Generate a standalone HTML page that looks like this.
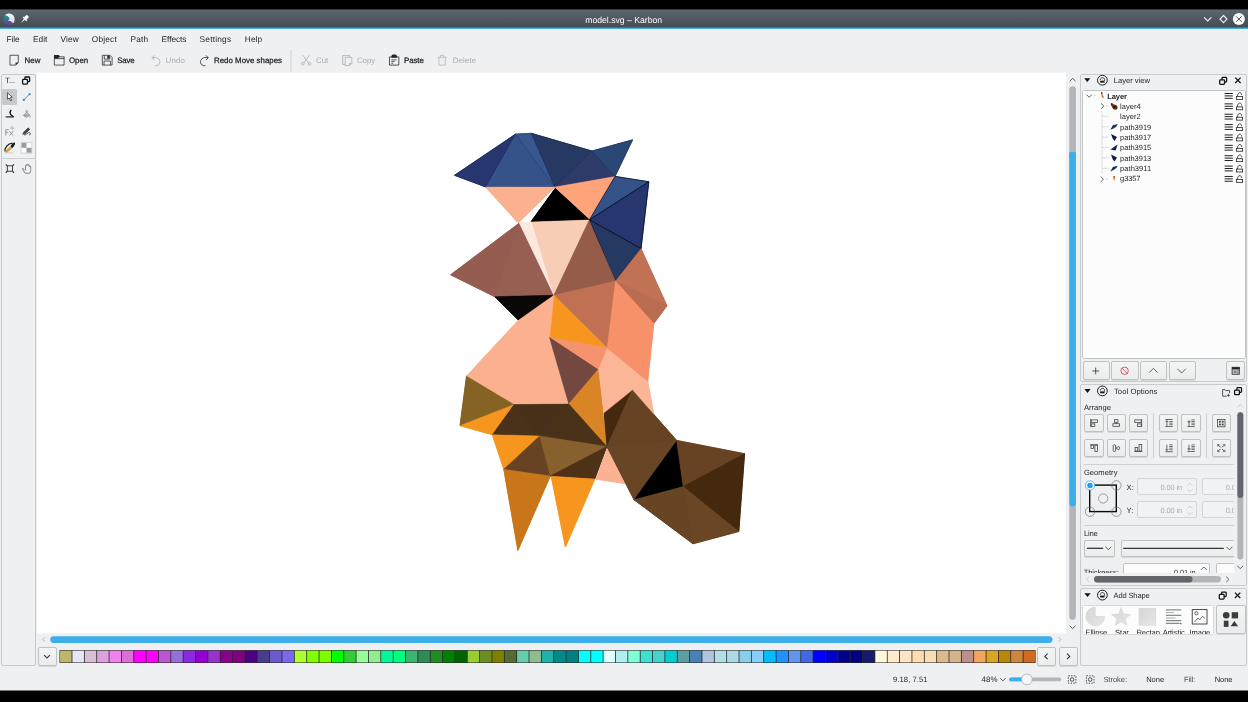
<!DOCTYPE html>
<html>
<head>
<meta charset="utf-8">
<title>model.svg – Karbon</title>
<style>
html,body{margin:0;padding:0;background:#000;}
body{width:1248px;height:702px;overflow:hidden;font-family:"Liberation Sans",sans-serif;}
#root{position:relative;width:1248px;height:702px;overflow:hidden;background:#000;}
#root *{box-sizing:border-box;}
.a{position:absolute;}
.t{position:absolute;white-space:nowrap;line-height:1;text-rendering:geometricPrecision;font-family:"Liberation Sans",sans-serif;}
svg{position:absolute;overflow:visible;}
.btn{position:absolute;border:1px solid #bfc1c3;border-radius:2px;background:linear-gradient(#f3f4f4,#ebecec);box-shadow:0 1px 0 rgba(0,0,0,.10);}
.panel{position:absolute;border:1px solid #c9cbcd;border-radius:2px;background:#eff0f1;}
</style>
</head>

<body>
<div id="root">
<!-- window background, title bar, canvas -->
<svg style="left:0;top:0" width="1248" height="702" viewBox="0 0 1248 702">
 <defs><linearGradient id="tb" x1="0" y1="0" x2="0" y2="1"><stop offset="0" stop-color="#5b666f"/><stop offset="0.5" stop-color="#4f5860"/><stop offset="1" stop-color="#454c53"/></linearGradient></defs>
 <rect x="0" y="9.8" width="1248" height="680.7" fill="#eff0f1"/>
 <rect x="0" y="9.8" width="1248" height="17.6" fill="url(#tb)"/>
 <rect x="0" y="27.2" width="1248" height="0.7" fill="#3a3e43"/>
 <rect x="0" y="27.8" width="1248" height="1.3" fill="#3daee9"/>
 <rect x="0" y="29.1" width="1248" height="0.6" fill="#fafbfb"/>
 <rect x="37" y="72.7" width="1029.1" height="560.6" fill="#ffffff"/>
 <rect x="290.5" y="50" width="0.9" height="21.6" fill="#cdcfd0"/>
</svg>
<svg style="left:0;top:0" width="1248" height="30" viewBox="0 0 1248 30">
 <defs>
  <linearGradient id="kg" x1="0" y1="0" x2="0.35" y2="1"><stop offset="0" stop-color="#12a27d"/><stop offset="0.45" stop-color="#2a7f92"/><stop offset="0.75" stop-color="#4b55a0"/><stop offset="1" stop-color="#7b3a9a"/></linearGradient>
  <linearGradient id="kw" x1="0" y1="0" x2="1" y2="1"><stop offset="0" stop-color="#ffffff"/><stop offset="1" stop-color="#d9dadb"/></linearGradient>
 </defs>
 <circle cx="9.1" cy="19.2" r="5.6" fill="url(#kg)"/>
 <path d="M5 15.2C7.4 12.6 12 12.8 13.8 16C15.2 18.6 14.8 21.4 13.6 23L12 22.6C11.4 21.4 10 20.8 8.2 20.8L8.6 19.8L9.6 19.2C9.6 17.6 8.8 16 5 15.2Z" fill="url(#kw)"/>
 <g transform="translate(24.6,19.2) rotate(45)" fill="#fcfcfc"><rect x="-1.7" y="-4.8" width="3.4" height="4" rx="0.8"/><rect x="-2.7" y="-1.2" width="5.4" height="1.5"/><path d="M-0.7 0.2H0.7L0 5.2Z"/></g>
 <path d="M1204 17.3L1207.7 21L1211.4 17.3" fill="none" stroke="#f0f1f2" stroke-width="1.15"/>
 <path d="M1223.5 15.5L1227 19.1L1223.5 22.7L1220 19.1Z" fill="none" stroke="#f0f1f2" stroke-width="1.15"/>
 <circle cx="1238.9" cy="19.1" r="6" fill="#fcfcfc"/>
 <path d="M1236.2 16.4L1241.6 21.8M1241.6 16.4L1236.2 21.8" fill="none" stroke="#4d555c" stroke-width="1"/>
</svg>

<!-- toolbar icons (22-unit grid scaled to 14.3px) -->
<svg style="left:7.3px;top:52.8px" width="14.3" height="14.3" viewBox="0 0 22 22" fill="none" stroke="#232629" stroke-width="1.15"><path d="M4.6 3.5H17.4V15L13.6 18.6H4.6Z"/><path d="M13.2 14.6H17.4L13.2 18.6Z" fill="#232629" stroke="none"/></svg>
<svg style="left:52.15px;top:52.8px" width="14.3" height="14.3" viewBox="0 0 22 22" fill="none" stroke="#232629" stroke-width="1.15"><path d="M3.6 8.6H18.6V18.6H3.6Z"/><path d="M3 3H10.4L12.4 5.4H19.2V6.6H10.6L9.2 8.6H3Z" fill="#232629" stroke="none"/><path d="M18.6 6V9"/></svg>
<svg style="left:100.2px;top:52.8px" width="14.3" height="14.3" viewBox="0 0 22 22" fill="none" stroke="#232629" stroke-width="1.15"><path d="M3.6 3.6H15.4L18.6 6.8V18.6H3.6Z"/><path d="M6.6 3.6V9.4H15V3.8"/><path d="M11.2 4H14.4V8.6H11.2Z" fill="#232629" stroke="none"/><path d="M6.2 18.6V12.4H16V18.6"/></svg>
<svg style="left:148.95px;top:52.8px" width="14.3" height="14.3" viewBox="0 0 22 22" fill="none" stroke="#a6a9ab" stroke-width="1.25"><path d="M5.2 7.2C12.6 5.6 17.4 10 16.6 14.4C16 18 13 20.2 9.2 19.6"/><path d="M8.2 3.6L4.6 7.2L8 10.8"/></svg>
<svg style="left:196.75px;top:52.8px" width="14.3" height="14.3" viewBox="0 0 22 22" fill="none" stroke="#232629" stroke-width="1.25"><path d="M16.8 7.2C9.4 5.6 4.6 10 5.4 14.4C6 18 9 20.2 12.8 19.6"/><path d="M13.8 3.6L17.4 7.2L14 10.8"/></svg>
<svg style="left:298.95px;top:52.8px" width="14.3" height="14.3" viewBox="0 0 22 22" fill="none" stroke="#a6a9ab" stroke-width="1.15"><path d="M6 3.4L14.6 15.4"/><path d="M16 3.4L7.4 15.4"/><circle cx="5.8" cy="16.6" r="2.1"/><circle cx="16.2" cy="16.6" r="2.1"/></svg>
<svg style="left:339.85px;top:52.8px" width="14.3" height="14.3" viewBox="0 0 22 22" fill="none" stroke="#a6a9ab" stroke-width="1.15"><path d="M15 6.2V4H4.2V17.6H7.8"/><path d="M8 6.6H18.2V16L14.8 19.4H8Z"/><path d="M14.4 15.6H18.2L14.4 19.4Z" fill="#a6a9ab" stroke="none"/></svg>
<svg style="left:386.8px;top:52.8px" width="14.3" height="14.3" viewBox="0 0 22 22" fill="none" stroke="#232629" stroke-width="1.2"><path d="M3.8 6H18.2V18.6H3.8Z"/><path d="M6.6 7.4C6.6 3 8 2.4 11 2.4C14 2.4 15.4 3 15.4 7.4Z" fill="#232629" stroke="none"/><path d="M6.6 10.6H14.6M6.6 13.2H11.6M6.6 15.8H9.4" stroke-width="1.1"/></svg>
<svg style="left:435.35px;top:52.8px" width="14.3" height="14.3" viewBox="0 0 22 22" fill="none" stroke="#b0b3b5" stroke-width="1.15"><path d="M4 6.6H18"/><path d="M8.4 6.4V3.6H13.6V6.4"/><path d="M6.2 6.8V18.6H15.8V6.8"/></svg>

<!-- toolbox dock -->
<div class="a" style="left:1.2px;top:73.6px;width:35px;height:592.4px;border:1px solid #c6c8ca;border-radius:2px;background:#eff0f1;"></div>
<div class="a" style="left:2.1px;top:89.2px;width:15.4px;height:15.5px;border-radius:1.6px;background:#c8c9ca;"></div>
<div class="a" style="left:1.2px;top:158px;width:34.8px;height:0.9px;background:#cdcfd0;"></div>
<svg style="left:0;top:72px" width="40" height="110" viewBox="0 72 40 110">
 <!-- float icon -->
 <rect x="24.9" y="77" width="4.7" height="4.7" rx="0.8" fill="none" stroke="#111" stroke-width="1.3"/>
 <rect x="22.6" y="79.4" width="4.9" height="4.7" rx="0.8" fill="#eff0f1" stroke="#111" stroke-width="1.3"/>
 <!-- arrow cursor -->
 <path d="M7.5 92.8V99.3L9.1 98L10.6 100.9L11.7 100.3L10.3 97.5L12.2 97.2Z" fill="#fcfcfc" stroke="#2b2e31" stroke-width="0.75" stroke-linejoin="round"/>
 <!-- line tool -->
 <path d="M23.8 99.9L29.6 94.2" stroke="#3a3d40" stroke-width="0.6"/>
 <circle cx="23.8" cy="99.9" r="1.15" fill="#1e96f0"/><circle cx="29.6" cy="94.2" r="1.15" fill="#1e96f0"/>
 <!-- calligraphy -->
 <path d="M5.6 116.9H14" stroke="#111" stroke-width="1.1"/>
 <path d="M11.2 110C9.4 112.2 9.4 114.6 13.4 116.5" fill="none" stroke="#111" stroke-width="1.3"/>
 <!-- bucket -->
 <g fill="none" stroke="#85888b" stroke-width="0.75"><circle cx="26.7" cy="111.3" r="0.9"/><path d="M26.7 112.2L23.4 115.4L26.6 117.6L29.6 114.8Z" fill="#c3c5c7"/><path d="M23.4 115.4H29.2"/><path d="M30 115.6V117.4" stroke-width="1"/></g>
 <!-- fx -->
 <g fill="none" stroke="#808386" stroke-width="0.8"><path d="M5.8 135.6V129.6H8.8M5.8 132.4H8.2"/><path d="M9.4 131.2L13.2 135.6M13.2 131.2L9.4 135.6"/><path d="M10.6 128.6C10.6 126.6 13.4 126.4 13.4 128.2C13.4 129.6 11.6 129.4 11.8 128.2" stroke-width="0.6"/></g>
 <!-- pencil -->
 <g fill="none" stroke="#2b2e31"><path d="M23.6 132.2L28.2 127.8L29.8 129.4L25.2 133.8Z" fill="#3a3d40" stroke-width="0.5"/><path d="M22.6 134.6L23.6 132.2L25.2 133.8Z" fill="#555" stroke-width="0.4"/><path d="M24 135C26.4 135.2 27.6 132.2 29.4 132.6C31 133 30.6 135 29.2 135" stroke-width="0.8"/></g>
 <!-- pen -->
 <path d="M5 151.4C4.4 147.8 7.6 143.6 12.6 143" fill="none" stroke="#111" stroke-width="1.1"/>
 <path d="M10.6 146.4C11.6 144 13.6 142.4 15 142.6C15.4 144.4 14 146.8 12 148.2Z" fill="#15182a"/>
 <path d="M10.6 146.4L12 148.2L7.4 152L5.6 152.4L5.4 151Z" fill="#e3a232" stroke="#7a5410" stroke-width="0.3"/>
 <path d="M5.2 152.8H13" stroke="#b9bbbd" stroke-width="0.6"/>
 <!-- checker -->
 <rect x="21.1" y="142.5" width="10.8" height="10.6" fill="#fcfcfc" stroke="#c2c4c5" stroke-width="0.6"/>
 <rect x="21.5" y="142.9" width="5" height="4.9" fill="#9b9b9b"/><rect x="26.5" y="147.8" width="5" height="4.9" fill="#9b9b9b"/>
 <!-- zoom fit -->
 <g fill="none" stroke="#2b2e31" stroke-width="0.9"><rect x="7.3" y="165.8" width="5.2" height="5.4"/><path d="M5.8 164.3L7.3 165.8M14 164.3L12.5 165.8M5.8 172.8L7.3 171.2M14 172.8L12.5 171.2" stroke-width="1.1"/></g>
 <!-- hand -->
 <path d="M24.6 169.8L23 168.4C22.2 167.8 22.4 169.2 23 170L25.2 173.2H29.8C30.8 171.6 30.8 169.6 30.6 166.6C30.4 165.8 29.6 165.8 29.4 166.6V165.4C29.2 164.6 28.2 164.6 28.2 165.4V164.8C28 164 27 164 26.8 164.8V165.6C26.6 164.8 25.6 164.8 25.6 165.8V170.4" fill="#f4f4f5" stroke="#55585b" stroke-width="0.7" stroke-linejoin="round"/>
</svg>

<svg class="a" style="left:0;top:0" width="1248" height="702" viewBox="0 0 1248 702">
<polygon points="607.2,347.8 647.7,381.2 653.8,414.0 640.0,422.0 604.3,412.9 598.0,369.6" fill="#fbb597" stroke="#fbb597" stroke-width="0.9" stroke-linejoin="round"/>
<polygon points="454.5,175.3 515.6,134.1 485.6,186.9" fill="#27366f" stroke="#27366f" stroke-width="0.9" stroke-linejoin="round"/>
<polygon points="515.6,134.1 554.9,187.0 485.6,186.9" fill="#355389" stroke="#355389" stroke-width="0.9" stroke-linejoin="round"/>
<polygon points="515.6,134.1 531.3,133.3 554.9,187.0" fill="#39578f" stroke="#39578f" stroke-width="0.9" stroke-linejoin="round"/>
<polygon points="531.3,133.3 592.0,151.0 554.9,187.0" fill="#263963" stroke="#263963" stroke-width="0.9" stroke-linejoin="round"/>
<polygon points="592.0,151.0 615.0,176.4 554.9,187.0" fill="#2e3b69" stroke="#2e3b69" stroke-width="0.9" stroke-linejoin="round"/>
<polygon points="592.0,151.0 632.6,139.8 615.0,176.4" fill="#2b4775" stroke="#2b4775" stroke-width="0.9" stroke-linejoin="round"/>
<polygon points="485.6,186.9 554.9,187.0 518.2,222.9" fill="#fbb08f" stroke="#fbb08f" stroke-width="0.9" stroke-linejoin="round"/>
<polygon points="554.9,187.0 615.0,176.4 589.4,219.8" fill="#ffa37b" stroke="#ffa37b" stroke-width="0.9" stroke-linejoin="round"/>
<polygon points="555.2,188.4 531.0,221.7 589.4,219.8" fill="#000000" stroke="#000000" stroke-width="0.9" stroke-linejoin="round"/>
<polygon points="615.0,176.4 648.8,181.8 589.4,219.8" fill="#355389" stroke="#355389" stroke-width="0.9" stroke-linejoin="round"/>
<polygon points="648.8,181.8 641.0,248.6 589.4,219.8" fill="#27366f" stroke="#27366f" stroke-width="0.9" stroke-linejoin="round"/>
<polygon points="589.4,219.8 641.0,248.6 615.5,281.0" fill="#263963" stroke="#263963" stroke-width="0.9" stroke-linejoin="round"/>
<polygon points="450.6,274.8 519.2,223.2 494.8,296.7" fill="#955d51" stroke="#955d51" stroke-width="0.9" stroke-linejoin="round"/>
<polygon points="519.2,223.2 553.9,295.2 494.8,296.7" fill="#975e52" stroke="#975e52" stroke-width="0.9" stroke-linejoin="round"/>
<polygon points="519.4,223.1 532.0,222.0 553.9,295.2" fill="#fde8de" stroke="#fde8de" stroke-width="0.9" stroke-linejoin="round"/>
<polygon points="532.0,222.0 589.0,220.0 553.9,295.2" fill="#f8cdb6" stroke="#f8cdb6" stroke-width="0.9" stroke-linejoin="round"/>
<polygon points="589.0,220.4 615.5,281.0 553.9,295.2" fill="#955c49" stroke="#955c49" stroke-width="0.9" stroke-linejoin="round"/>
<polygon points="641.0,248.6 667.0,305.8 615.5,281.0" fill="#c27254" stroke="#c27254" stroke-width="0.9" stroke-linejoin="round"/>
<polygon points="615.5,281.0 667.0,305.8 653.8,323.5" fill="#ba6d50" stroke="#ba6d50" stroke-width="0.9" stroke-linejoin="round"/>
<polygon points="494.8,296.7 553.9,295.2 518.5,320.2" fill="#0a0806" stroke="#0a0806" stroke-width="0.9" stroke-linejoin="round"/>
<polygon points="553.9,295.2 615.5,281.0 607.2,347.8" fill="#c07153" stroke="#c07153" stroke-width="0.9" stroke-linejoin="round"/>
<polygon points="553.9,295.2 549.5,337.4 607.2,347.8" fill="#f7961e" stroke="#f7961e" stroke-width="0.9" stroke-linejoin="round"/>
<polygon points="615.5,281.0 653.8,323.5 647.7,381.2 607.2,347.8" fill="#f7916a" stroke="#f7916a" stroke-width="0.9" stroke-linejoin="round"/>
<polygon points="553.9,295.2 518.5,320.2 466.5,376.2 514.0,404.6 568.8,404.0 549.5,337.4" fill="#fbb190" stroke="#fbb190" stroke-width="0.9" stroke-linejoin="round"/>
<polygon points="549.5,337.4 607.2,347.8 598.0,369.6" fill="#f6936f" stroke="#f6936f" stroke-width="0.9" stroke-linejoin="round"/>
<polygon points="549.5,337.4 598.0,369.6 568.8,404.0" fill="#744841" stroke="#744841" stroke-width="0.9" stroke-linejoin="round"/>
<polygon points="598.0,369.6 568.8,404.0 606.8,446.6" fill="#d98425" stroke="#d98425" stroke-width="0.9" stroke-linejoin="round"/>
<polygon points="466.5,376.2 460.0,425.7 514.0,404.6" fill="#846324" stroke="#846324" stroke-width="0.9" stroke-linejoin="round"/>
<polygon points="460.0,425.7 514.0,404.6 492.3,434.7" fill="#f7961e" stroke="#f7961e" stroke-width="0.9" stroke-linejoin="round"/>
<polygon points="514.0,404.6 492.3,434.7 539.7,435.9" fill="#4a3219" stroke="#4a3219" stroke-width="0.9" stroke-linejoin="round"/>
<polygon points="514.0,404.6 568.8,404.0 539.7,435.9" fill="#47311a" stroke="#47311a" stroke-width="0.9" stroke-linejoin="round"/>
<polygon points="568.8,404.0 606.8,446.6 539.7,435.9" fill="#4a3219" stroke="#4a3219" stroke-width="0.9" stroke-linejoin="round"/>
<polygon points="492.3,434.7 539.7,435.9 503.8,469.3" fill="#f7961e" stroke="#f7961e" stroke-width="0.9" stroke-linejoin="round"/>
<polygon points="539.7,435.9 503.8,469.3 550.3,476.0" fill="#674323" stroke="#674323" stroke-width="0.9" stroke-linejoin="round"/>
<polygon points="539.7,435.9 606.8,446.6 550.3,476.0" fill="#87602e" stroke="#87602e" stroke-width="0.9" stroke-linejoin="round"/>
<polygon points="606.8,446.6 594.8,479.0 550.3,476.0" fill="#4f3118" stroke="#4f3118" stroke-width="0.9" stroke-linejoin="round"/>
<polygon points="503.8,469.3 550.3,476.0 517.9,550.4" fill="#c87619" stroke="#c87619" stroke-width="0.9" stroke-linejoin="round"/>
<polygon points="551.2,476.2 594.8,479.0 565.4,547.0" fill="#f7961e" stroke="#f7961e" stroke-width="0.9" stroke-linejoin="round"/>
<polygon points="607.3,448.8 595.8,479.1 624.5,483.5" fill="#fbb293" stroke="#fbb293" stroke-width="0.9" stroke-linejoin="round"/>
<polygon points="632.5,390.2 604.3,412.9 606.8,446.6" fill="#45290f" stroke="#45290f" stroke-width="0.9" stroke-linejoin="round"/>
<polygon points="632.5,390.2 676.6,440.4 606.8,446.6" fill="#664323" stroke="#664323" stroke-width="0.9" stroke-linejoin="round"/>
<polygon points="606.8,446.6 676.6,440.4 634.0,499.7" fill="#684525" stroke="#684525" stroke-width="0.9" stroke-linejoin="round"/>
<polygon points="676.6,441.2 682.9,486.5 634.4,499.4" fill="#000000" stroke="#000000" stroke-width="0.9" stroke-linejoin="round"/>
<polygon points="676.6,440.4 744.6,453.7 683.2,486.6" fill="#674323" stroke="#674323" stroke-width="0.9" stroke-linejoin="round"/>
<polygon points="744.6,453.7 738.8,531.5 683.2,486.6" fill="#45290f" stroke="#45290f" stroke-width="0.9" stroke-linejoin="round"/>
<polygon points="634.0,499.7 683.2,486.6 693.0,543.8" fill="#674424" stroke="#674424" stroke-width="0.9" stroke-linejoin="round"/>
<polygon points="683.2,486.6 738.8,531.5 693.0,543.8" fill="#6a4625" stroke="#6a4625" stroke-width="0.9" stroke-linejoin="round"/>
<polygon points="607.2,347.8 647.7,381.2 653.8,414.0 640.0,422.0 604.3,412.9 598.0,369.6" fill="#fbb597" stroke="#fbb597" stroke-width="0.4" stroke-linejoin="round"/>
<polygon points="454.5,175.3 515.6,134.1 485.6,186.9" fill="#27366f" stroke="#1b2758" stroke-width="0.5" stroke-linejoin="round"/>
<polygon points="515.6,134.1 554.9,187.0 485.6,186.9" fill="#355389" stroke="#1f3061" stroke-width="0.5" stroke-linejoin="round"/>
<polygon points="515.6,134.1 531.3,133.3 554.9,187.0" fill="#39578f" stroke="#2a4278" stroke-width="0.4" stroke-linejoin="round"/>
<polygon points="531.3,133.3 592.0,151.0 554.9,187.0" fill="#263963" stroke="#1b2a50" stroke-width="0.5" stroke-linejoin="round"/>
<polygon points="592.0,151.0 615.0,176.4 554.9,187.0" fill="#2e3b69" stroke="#222d55" stroke-width="0.5" stroke-linejoin="round"/>
<polygon points="592.0,151.0 632.6,139.8 615.0,176.4" fill="#2b4775" stroke="#1f3560" stroke-width="0.5" stroke-linejoin="round"/>
<polygon points="485.6,186.9 554.9,187.0 518.2,222.9" fill="#fbb08f" stroke="#fbb08f" stroke-width="0.4" stroke-linejoin="round"/>
<polygon points="554.9,187.0 615.0,176.4 589.4,219.8" fill="#ffa37b" stroke="#ffa37b" stroke-width="0.4" stroke-linejoin="round"/>
<polygon points="555.2,188.4 531.0,221.7 589.4,219.8" fill="#000000" stroke="#000000" stroke-width="0.4" stroke-linejoin="round"/>
<polygon points="615.0,176.4 648.8,181.8 589.4,219.8" fill="#355389" stroke="#060b1c" stroke-width="0.7" stroke-linejoin="round"/>
<polygon points="648.8,181.8 641.0,248.6 589.4,219.8" fill="#27366f" stroke="#060b1c" stroke-width="0.7" stroke-linejoin="round"/>
<polygon points="589.4,219.8 641.0,248.6 615.5,281.0" fill="#263963" stroke="#060b1c" stroke-width="0.7" stroke-linejoin="round"/>
<polygon points="450.6,274.8 519.2,223.2 494.8,296.7" fill="#955d51" stroke="#955d51" stroke-width="0.4" stroke-linejoin="round"/>
<polygon points="519.2,223.2 553.9,295.2 494.8,296.7" fill="#975e52" stroke="#975e52" stroke-width="0.4" stroke-linejoin="round"/>
<polygon points="519.4,223.1 532.0,222.0 553.9,295.2" fill="#fde8de" stroke="#fde8de" stroke-width="0.4" stroke-linejoin="round"/>
<polygon points="532.0,222.0 589.0,220.0 553.9,295.2" fill="#f8cdb6" stroke="#f8cdb6" stroke-width="0.4" stroke-linejoin="round"/>
<polygon points="589.0,220.4 615.5,281.0 553.9,295.2" fill="#955c49" stroke="#955c49" stroke-width="0.4" stroke-linejoin="round"/>
<polygon points="641.0,248.6 667.0,305.8 615.5,281.0" fill="#c27254" stroke="#c27254" stroke-width="0.4" stroke-linejoin="round"/>
<polygon points="615.5,281.0 667.0,305.8 653.8,323.5" fill="#ba6d50" stroke="#ba6d50" stroke-width="0.4" stroke-linejoin="round"/>
<polygon points="494.8,296.7 553.9,295.2 518.5,320.2" fill="#0a0806" stroke="#0a0806" stroke-width="0.4" stroke-linejoin="round"/>
<polygon points="553.9,295.2 615.5,281.0 607.2,347.8" fill="#c07153" stroke="#c07153" stroke-width="0.4" stroke-linejoin="round"/>
<polygon points="553.9,295.2 549.5,337.4 607.2,347.8" fill="#f7961e" stroke="#f7961e" stroke-width="0.4" stroke-linejoin="round"/>
<polygon points="615.5,281.0 653.8,323.5 647.7,381.2 607.2,347.8" fill="#f7916a" stroke="#f7916a" stroke-width="0.4" stroke-linejoin="round"/>
<polygon points="553.9,295.2 518.5,320.2 466.5,376.2 514.0,404.6 568.8,404.0 549.5,337.4" fill="#fbb190" stroke="#fbb190" stroke-width="0.4" stroke-linejoin="round"/>
<polygon points="549.5,337.4 607.2,347.8 598.0,369.6" fill="#f6936f" stroke="#f6936f" stroke-width="0.4" stroke-linejoin="round"/>
<polygon points="549.5,337.4 598.0,369.6 568.8,404.0" fill="#744841" stroke="#744841" stroke-width="0.4" stroke-linejoin="round"/>
<polygon points="598.0,369.6 568.8,404.0 606.8,446.6" fill="#d98425" stroke="#d98425" stroke-width="0.4" stroke-linejoin="round"/>
<polygon points="466.5,376.2 460.0,425.7 514.0,404.6" fill="#846324" stroke="#846324" stroke-width="0.4" stroke-linejoin="round"/>
<polygon points="460.0,425.7 514.0,404.6 492.3,434.7" fill="#f7961e" stroke="#f7961e" stroke-width="0.4" stroke-linejoin="round"/>
<polygon points="514.0,404.6 492.3,434.7 539.7,435.9" fill="#4a3219" stroke="#4a3219" stroke-width="0.4" stroke-linejoin="round"/>
<polygon points="514.0,404.6 568.8,404.0 539.7,435.9" fill="#47311a" stroke="#47311a" stroke-width="0.4" stroke-linejoin="round"/>
<polygon points="568.8,404.0 606.8,446.6 539.7,435.9" fill="#4a3219" stroke="#4a3219" stroke-width="0.4" stroke-linejoin="round"/>
<polygon points="492.3,434.7 539.7,435.9 503.8,469.3" fill="#f7961e" stroke="#f7961e" stroke-width="0.4" stroke-linejoin="round"/>
<polygon points="539.7,435.9 503.8,469.3 550.3,476.0" fill="#674323" stroke="#674323" stroke-width="0.4" stroke-linejoin="round"/>
<polygon points="539.7,435.9 606.8,446.6 550.3,476.0" fill="#87602e" stroke="#87602e" stroke-width="0.4" stroke-linejoin="round"/>
<polygon points="606.8,446.6 594.8,479.0 550.3,476.0" fill="#4f3118" stroke="#4f3118" stroke-width="0.4" stroke-linejoin="round"/>
<polygon points="503.8,469.3 550.3,476.0 517.9,550.4" fill="#c87619" stroke="#c87619" stroke-width="0.4" stroke-linejoin="round"/>
<polygon points="551.2,476.2 594.8,479.0 565.4,547.0" fill="#f7961e" stroke="#f7961e" stroke-width="0.4" stroke-linejoin="round"/>
<polygon points="607.3,448.8 595.8,479.1 624.5,483.5" fill="#fbb293" stroke="#fbb293" stroke-width="0.4" stroke-linejoin="round"/>
<polygon points="632.5,390.2 604.3,412.9 606.8,446.6" fill="#45290f" stroke="#45290f" stroke-width="0.4" stroke-linejoin="round"/>
<polygon points="632.5,390.2 676.6,440.4 606.8,446.6" fill="#664323" stroke="#664323" stroke-width="0.4" stroke-linejoin="round"/>
<polygon points="606.8,446.6 676.6,440.4 634.0,499.7" fill="#684525" stroke="#684525" stroke-width="0.4" stroke-linejoin="round"/>
<polygon points="676.6,441.2 682.9,486.5 634.4,499.4" fill="#000000" stroke="#000000" stroke-width="0.4" stroke-linejoin="round"/>
<polygon points="676.6,440.4 744.6,453.7 683.2,486.6" fill="#674323" stroke="#674323" stroke-width="0.4" stroke-linejoin="round"/>
<polygon points="744.6,453.7 738.8,531.5 683.2,486.6" fill="#45290f" stroke="#45290f" stroke-width="0.4" stroke-linejoin="round"/>
<polygon points="634.0,499.7 683.2,486.6 693.0,543.8" fill="#674424" stroke="#674424" stroke-width="0.4" stroke-linejoin="round"/>
<polygon points="683.2,486.6 738.8,531.5 693.0,543.8" fill="#6a4625" stroke="#6a4625" stroke-width="0.4" stroke-linejoin="round"/>
</svg>
<!-- palette -->
<svg style="left:0;top:640px" width="1248" height="30" viewBox="0 640 1248 30">
<rect x="59.50" y="650.10" width="976.11" height="12.90" fill="#2a2a2a"/>
<rect x="60.05" y="650.65" width="11.55" height="11.80" fill="#BDB76B"/>
<rect x="72.40" y="650.65" width="11.55" height="11.80" fill="#E6E6FA"/>
<rect x="84.75" y="650.65" width="11.55" height="11.80" fill="#D8BFD8"/>
<rect x="97.11" y="650.65" width="11.55" height="11.80" fill="#DDA0DD"/>
<rect x="109.46" y="650.65" width="11.55" height="11.80" fill="#EE82EE"/>
<rect x="121.81" y="650.65" width="11.55" height="11.80" fill="#DA70D6"/>
<rect x="134.16" y="650.65" width="11.55" height="11.80" fill="#FF00FF"/>
<rect x="146.51" y="650.65" width="11.55" height="11.80" fill="#FF00FF"/>
<rect x="158.87" y="650.65" width="11.55" height="11.80" fill="#BA55D3"/>
<rect x="171.22" y="650.65" width="11.55" height="11.80" fill="#9370DB"/>
<rect x="183.57" y="650.65" width="11.55" height="11.80" fill="#8A2BE2"/>
<rect x="195.92" y="650.65" width="11.55" height="11.80" fill="#9400D3"/>
<rect x="208.27" y="650.65" width="11.55" height="11.80" fill="#9932CC"/>
<rect x="220.63" y="650.65" width="11.55" height="11.80" fill="#8B008B"/>
<rect x="232.98" y="650.65" width="11.55" height="11.80" fill="#800080"/>
<rect x="245.33" y="650.65" width="11.55" height="11.80" fill="#4B0082"/>
<rect x="257.68" y="650.65" width="11.55" height="11.80" fill="#483D8B"/>
<rect x="270.03" y="650.65" width="11.55" height="11.80" fill="#6A5ACD"/>
<rect x="282.39" y="650.65" width="11.55" height="11.80" fill="#7B68EE"/>
<rect x="294.74" y="650.65" width="11.55" height="11.80" fill="#ADFF2F"/>
<rect x="307.09" y="650.65" width="11.55" height="11.80" fill="#7FFF00"/>
<rect x="319.44" y="650.65" width="11.55" height="11.80" fill="#7CFC00"/>
<rect x="331.79" y="650.65" width="11.55" height="11.80" fill="#00FF00"/>
<rect x="344.15" y="650.65" width="11.55" height="11.80" fill="#32CD32"/>
<rect x="356.50" y="650.65" width="11.55" height="11.80" fill="#98FB98"/>
<rect x="368.85" y="650.65" width="11.55" height="11.80" fill="#90EE90"/>
<rect x="381.20" y="650.65" width="11.55" height="11.80" fill="#00FA9A"/>
<rect x="393.55" y="650.65" width="11.55" height="11.80" fill="#00FF7F"/>
<rect x="405.91" y="650.65" width="11.55" height="11.80" fill="#3CB371"/>
<rect x="418.26" y="650.65" width="11.55" height="11.80" fill="#2E8B57"/>
<rect x="430.61" y="650.65" width="11.55" height="11.80" fill="#228B22"/>
<rect x="442.96" y="650.65" width="11.55" height="11.80" fill="#008000"/>
<rect x="455.31" y="650.65" width="11.55" height="11.80" fill="#006400"/>
<rect x="467.67" y="650.65" width="11.55" height="11.80" fill="#9ACD32"/>
<rect x="480.02" y="650.65" width="11.55" height="11.80" fill="#6B8E23"/>
<rect x="492.37" y="650.65" width="11.55" height="11.80" fill="#808000"/>
<rect x="504.72" y="650.65" width="11.55" height="11.80" fill="#556B2F"/>
<rect x="517.07" y="650.65" width="11.55" height="11.80" fill="#66CDAA"/>
<rect x="529.43" y="650.65" width="11.55" height="11.80" fill="#8FBC8F"/>
<rect x="541.78" y="650.65" width="11.55" height="11.80" fill="#20B2AA"/>
<rect x="554.13" y="650.65" width="11.55" height="11.80" fill="#008B8B"/>
<rect x="566.48" y="650.65" width="11.55" height="11.80" fill="#008080"/>
<rect x="578.83" y="650.65" width="11.55" height="11.80" fill="#00FFFF"/>
<rect x="591.19" y="650.65" width="11.55" height="11.80" fill="#00FFFF"/>
<rect x="603.54" y="650.65" width="11.55" height="11.80" fill="#E0FFFF"/>
<rect x="615.89" y="650.65" width="11.55" height="11.80" fill="#AFEEEE"/>
<rect x="628.24" y="650.65" width="11.55" height="11.80" fill="#7FFFD4"/>
<rect x="640.59" y="650.65" width="11.55" height="11.80" fill="#40E0D0"/>
<rect x="652.95" y="650.65" width="11.55" height="11.80" fill="#48D1CC"/>
<rect x="665.30" y="650.65" width="11.55" height="11.80" fill="#00CED1"/>
<rect x="677.65" y="650.65" width="11.55" height="11.80" fill="#5F9EA0"/>
<rect x="690.00" y="650.65" width="11.55" height="11.80" fill="#4682B4"/>
<rect x="702.35" y="650.65" width="11.55" height="11.80" fill="#B0C4DE"/>
<rect x="714.71" y="650.65" width="11.55" height="11.80" fill="#B0E0E6"/>
<rect x="727.06" y="650.65" width="11.55" height="11.80" fill="#ADD8E6"/>
<rect x="739.41" y="650.65" width="11.55" height="11.80" fill="#87CEEB"/>
<rect x="751.76" y="650.65" width="11.55" height="11.80" fill="#87CEFA"/>
<rect x="764.11" y="650.65" width="11.55" height="11.80" fill="#00BFFF"/>
<rect x="776.47" y="650.65" width="11.55" height="11.80" fill="#1E90FF"/>
<rect x="788.82" y="650.65" width="11.55" height="11.80" fill="#6495ED"/>
<rect x="801.17" y="650.65" width="11.55" height="11.80" fill="#4169E1"/>
<rect x="813.52" y="650.65" width="11.55" height="11.80" fill="#0000FF"/>
<rect x="825.87" y="650.65" width="11.55" height="11.80" fill="#0000CD"/>
<rect x="838.23" y="650.65" width="11.55" height="11.80" fill="#00008B"/>
<rect x="850.58" y="650.65" width="11.55" height="11.80" fill="#000080"/>
<rect x="862.93" y="650.65" width="11.55" height="11.80" fill="#191970"/>
<rect x="875.28" y="650.65" width="11.55" height="11.80" fill="#FFF8DC"/>
<rect x="887.63" y="650.65" width="11.55" height="11.80" fill="#FFEBCD"/>
<rect x="899.99" y="650.65" width="11.55" height="11.80" fill="#FFE4C4"/>
<rect x="912.34" y="650.65" width="11.55" height="11.80" fill="#FFDEAD"/>
<rect x="924.69" y="650.65" width="11.55" height="11.80" fill="#F5DEB3"/>
<rect x="937.04" y="650.65" width="11.55" height="11.80" fill="#DEB887"/>
<rect x="949.39" y="650.65" width="11.55" height="11.80" fill="#D2B48C"/>
<rect x="961.75" y="650.65" width="11.55" height="11.80" fill="#BC8F8F"/>
<rect x="974.10" y="650.65" width="11.55" height="11.80" fill="#F4A460"/>
<rect x="986.45" y="650.65" width="11.55" height="11.80" fill="#DAA520"/>
<rect x="998.80" y="650.65" width="11.55" height="11.80" fill="#B8860B"/>
<rect x="1011.15" y="650.65" width="11.55" height="11.80" fill="#CD853F"/>
<rect x="1023.51" y="650.65" width="11.55" height="11.80" fill="#D2691E"/>
</svg>
<div class="btn" style="left:37.6px;top:646.6px;width:19.2px;height:19.6px;"></div>
<div class="btn" style="left:1036.6px;top:646.6px;width:19.4px;height:19.6px;"></div>
<div class="btn" style="left:1058.8px;top:646.6px;width:19.4px;height:19.6px;"></div>
<svg style="left:0;top:630px" width="1248" height="40" viewBox="0 630 1248 40" fill="none">
<path d="M44.1 655.1L47 658L49.9 655.1" stroke="#2b2e31" stroke-width="1.05"/>
<path d="M1047.6 653.6L1044.8 656.4L1047.6 659.2" stroke="#2b2e31" stroke-width="1.05"/>
<path d="M1067 653.6L1069.8 656.4L1067 659.2" stroke="#2b2e31" stroke-width="1.05"/>
<rect x="50.3" y="636.2" width="1002.2" height="6.8" rx="3.4" fill="#3daee9"/>
<path d="M45 637.4L42.8 639.6L45 641.8" stroke="#a4a7a9" stroke-width="0.85"/>
<path d="M1058.6 637.4L1060.8 639.6L1058.6 641.8" stroke="#a4a7a9" stroke-width="0.85"/>
</svg>
<svg style="left:1064px;top:72px" width="16" height="564" viewBox="1064 72 16 564" fill="none">
<rect x="1069.3" y="86.3" width="6.6" height="533.6" rx="3.3" fill="#b3b5b8"/>
<rect x="1069.3" y="152.2" width="6.6" height="354.2" rx="3.3" fill="#3daee9"/>
<rect x="1069.3" y="152.2" width="6.6" height="6" fill="#3daee9"/>
<path d="M1069.7 81.2L1072.6 78.4L1075.5 81.2" stroke="#3a3d40" stroke-width="0.85"/>
<path d="M1069.7 625.8L1072.6 628.6L1075.5 625.8" stroke="#3a3d40" stroke-width="0.85"/>
</svg>
<!-- status bar widgets -->
<svg style="left:990px;top:668px" width="120" height="24" viewBox="990 668 120 24" fill="none">
 <path d="M1000.2 678.2L1002.9 680.9L1005.6 678.2" stroke="#3a3d40" stroke-width="0.85"/>
 <rect x="1009.2" y="677.5" width="52" height="3.8" rx="1.9" fill="#b3b5b8"/>
 <rect x="1009.2" y="677.5" width="19" height="3.8" rx="1.9" fill="#3daee9"/>
 <circle cx="1026.9" cy="679.4" r="5.4" fill="#f6f6f7" stroke="#a8abad" stroke-width="0.8"/>
 <g stroke="#2b2e31" stroke-width="0.8">
  <path d="M1068.3 675.8H1075.9V683.2H1068.3Z" stroke-dasharray="1.5 1.2"/>
  <circle cx="1072.1" cy="679.5" r="1.8"/>
  <path d="M1086.4 675.8H1094V683.2H1086.4Z" stroke-dasharray="1.5 1.2"/>
  <circle cx="1090.2" cy="679.5" r="1.8"/>
 </g>
</svg>

<!-- layer view dock -->
<div class="panel" style="left:1080.2px;top:74.2px;width:166.6px;height:308px;"></div>
<div class="a" style="left:1082.4px;top:90.2px;width:163.2px;height:269.2px;border:1px solid #c3c5c7;border-radius:1.5px;background:#fcfcfc;"></div>
<div class="btn" style="left:1082.5px;top:361.4px;width:27.1px;height:18.8px;"></div>
<div class="btn" style="left:1111.4px;top:361.4px;width:27.2px;height:18.8px;"></div>
<div class="btn" style="left:1140.4px;top:361.4px;width:26.4px;height:18.8px;"></div>
<div class="btn" style="left:1168.6px;top:361.4px;width:27.2px;height:18.8px;"></div>
<div class="btn" style="left:1226.2px;top:361.4px;width:19.2px;height:18.8px;"></div>
<svg style="left:1078px;top:72px" width="170" height="312" viewBox="1078 72 170 312" fill="none">
<path d="M1084.2 78.3H1090.4L1087.3 82.1Z" fill="#111"/>
<circle cx="1102.4" cy="80.2" r="4.9" stroke="#151515" stroke-width="0.95"/>
<path d="M1100.3 79.9C1100.3 77.0 1104.5 77.0 1104.5 79.6L1104.5 80.8" stroke="#151515" stroke-width="0.8"/>
<rect x="1100.2" y="80.7" width="4.3" height="1.9" fill="#151515"/>
<rect x="1222.0" y="77.4" width="4.6" height="4.6" rx="0.8" stroke="#111" stroke-width="1.25"/>
<rect x="1219.7" y="79.8" width="4.8" height="4.6" rx="0.8" fill="#eff0f1" stroke="#111" stroke-width="1.25"/>
<path d="M1235.2 77.6L1240.6 83.0M1240.6 77.6L1235.2 83.0" stroke="#111" stroke-width="1.25"/>
<path d="M1086.5 94.6L1089.2 97.3L1091.9 94.6" stroke="#3a3d40" stroke-width="0.8"/>
<path d="M1093.2 95.7H1095.8" stroke="#c9cbcc" stroke-width="0.7"/>
<path d="M1101 103.4L1103.8 106.1L1101 108.8" stroke="#3a3d40" stroke-width="0.8"/>
<path d="M1106.1 105.8H1108.4" stroke="#c9cbcc" stroke-width="0.7"/>
<path d="M1100.6 176.5L1103.4 179.2L1100.6 181.9" stroke="#3a3d40" stroke-width="0.8"/>
<path d="M1105.6 179H1107.8" stroke="#c9cbcc" stroke-width="0.7"/>
<path d="M1102 110.2V173.6" stroke="#cfd0d1" stroke-width="0.7"/>
<path d="M1102 116.3H1108.6" stroke="#cfd0d1" stroke-width="0.7"/>
<path d="M1102 126.7H1108.6" stroke="#cfd0d1" stroke-width="0.7"/>
<path d="M1102 137.1H1108.6" stroke="#cfd0d1" stroke-width="0.7"/>
<path d="M1102 147.5H1108.6" stroke="#cfd0d1" stroke-width="0.7"/>
<path d="M1102 157.9H1108.6" stroke="#cfd0d1" stroke-width="0.7"/>
<path d="M1102 168.3H1108.6" stroke="#cfd0d1" stroke-width="0.7"/>
<path d="M1100.6 92.2L1102.4 92L1102.6 94L1101.2 94Z" fill="#3a5a9a"/>
<path d="M1101 94L1102.8 94L1103.4 96.6L1101.4 96.2Z" fill="#f28a4c"/>
<path d="M1101.6 96.2L1103.8 96.6L1103.8 97.8L1101.8 97.4Z" fill="#b5651d"/>
<path d="M1110.8 103.4C1111.8 102.4 1113 103.4 1113.6 104.6C1115.4 104.4 1117.4 105.4 1117.6 107.4C1117.6 109.2 1116 110 1114.6 109.6C1113 109.2 1112.4 107.8 1111.8 106.4C1111 105.4 1110.4 104.4 1110.8 103.4Z" fill="#5c3314"/>
<path d="M1113.4 106.2L1115.2 106L1115.6 107.8L1114 108.2Z" fill="#1d1108"/>
<path d="M1110.3 129.7L1112.9 125.2L1117.7 124.1L1116.4 126.4L1113.6 128.4Z" fill="#1b2f6e"/>
<path d="M1111 133.9L1117 136.9L1114.6 140.9L1112.8 138.7Z" fill="#0f1b4c"/>
<path d="M1117.6 144.6L1115.6 150.6L1110.4 149.4Z" fill="#0f1b4c"/>
<path d="M1111 154.6L1117 157.6L1114.6 161.6L1112.8 159.4Z" fill="#0f1b4c"/>
<path d="M1110.3 171.4L1112.9 166.9L1117.7 165.8L1116.4 168.1L1113.6 170.1Z" fill="#1b2f6e"/>
<path d="M1113.2 176L1115.2 176L1115.2 178L1113.4 178Z" fill="#d85a2a"/><path d="M1113.2 178L1115.2 178L1115 180.2L1113.4 180Z" fill="#f0a050"/>
<path d="M1224.6 93.50H1232.8M1224.6 95.90H1232.8M1224.6 98.30H1232.8" stroke="#151515" stroke-width="0.95"/>
<rect x="1236.4" y="96.50" width="6.2" height="2.9" stroke="#2b2e31" stroke-width="0.85"/>
<path d="M1237.5 96.50C1237.3 91.90 1241.5 91.50 1241.7 95.10" stroke="#2b2e31" stroke-width="0.85"/>
<path d="M1224.6 103.87H1232.8M1224.6 106.27H1232.8M1224.6 108.67H1232.8" stroke="#151515" stroke-width="0.95"/>
<rect x="1236.4" y="106.87" width="6.2" height="2.9" stroke="#2b2e31" stroke-width="0.85"/>
<path d="M1237.5 106.87C1237.3 102.27 1241.5 101.87 1241.7 105.47" stroke="#2b2e31" stroke-width="0.85"/>
<path d="M1224.6 114.24H1232.8M1224.6 116.64H1232.8M1224.6 119.04H1232.8" stroke="#151515" stroke-width="0.95"/>
<rect x="1236.4" y="117.24" width="6.2" height="2.9" stroke="#2b2e31" stroke-width="0.85"/>
<path d="M1237.5 117.24C1237.3 112.64 1241.5 112.24 1241.7 115.84" stroke="#2b2e31" stroke-width="0.85"/>
<path d="M1224.6 124.61H1232.8M1224.6 127.01H1232.8M1224.6 129.41H1232.8" stroke="#151515" stroke-width="0.95"/>
<rect x="1236.4" y="127.61" width="6.2" height="2.9" stroke="#2b2e31" stroke-width="0.85"/>
<path d="M1237.5 127.61C1237.3 123.01 1241.5 122.61 1241.7 126.21" stroke="#2b2e31" stroke-width="0.85"/>
<path d="M1224.6 134.98H1232.8M1224.6 137.38H1232.8M1224.6 139.78H1232.8" stroke="#151515" stroke-width="0.95"/>
<rect x="1236.4" y="137.98" width="6.2" height="2.9" stroke="#2b2e31" stroke-width="0.85"/>
<path d="M1237.5 137.98C1237.3 133.38 1241.5 132.98 1241.7 136.58" stroke="#2b2e31" stroke-width="0.85"/>
<path d="M1224.6 145.35H1232.8M1224.6 147.75H1232.8M1224.6 150.15H1232.8" stroke="#151515" stroke-width="0.95"/>
<rect x="1236.4" y="148.35" width="6.2" height="2.9" stroke="#2b2e31" stroke-width="0.85"/>
<path d="M1237.5 148.35C1237.3 143.75 1241.5 143.35 1241.7 146.95" stroke="#2b2e31" stroke-width="0.85"/>
<path d="M1224.6 155.72H1232.8M1224.6 158.12H1232.8M1224.6 160.52H1232.8" stroke="#151515" stroke-width="0.95"/>
<rect x="1236.4" y="158.72" width="6.2" height="2.9" stroke="#2b2e31" stroke-width="0.85"/>
<path d="M1237.5 158.72C1237.3 154.12 1241.5 153.72 1241.7 157.32" stroke="#2b2e31" stroke-width="0.85"/>
<path d="M1224.6 166.09H1232.8M1224.6 168.49H1232.8M1224.6 170.89H1232.8" stroke="#151515" stroke-width="0.95"/>
<rect x="1236.4" y="169.09" width="6.2" height="2.9" stroke="#2b2e31" stroke-width="0.85"/>
<path d="M1237.5 169.09C1237.3 164.49 1241.5 164.09 1241.7 167.69" stroke="#2b2e31" stroke-width="0.85"/>
<path d="M1224.6 176.46H1232.8M1224.6 178.86H1232.8M1224.6 181.26H1232.8" stroke="#151515" stroke-width="0.95"/>
<rect x="1236.4" y="179.46" width="6.2" height="2.9" stroke="#2b2e31" stroke-width="0.85"/>
<path d="M1237.5 179.46C1237.3 174.86 1241.5 174.46 1241.7 178.06" stroke="#2b2e31" stroke-width="0.85"/>
<path d="M1092.3 371H1099.1M1095.7 367.6V374.4" stroke="#2b2e31" stroke-width="0.8"/>
<circle cx="1124.6" cy="370.8" r="3.7" stroke="#da4453" stroke-width="0.9"/><path d="M1122 368.2L1127.2 373.4" stroke="#da4453" stroke-width="0.9"/>
<path d="M1149.2 372.6L1153.4 368.4L1157.6 372.6" stroke="#3a3d40" stroke-width="0.8"/>
<path d="M1177.4 368.8L1181.6 373L1185.8 368.8" stroke="#3a3d40" stroke-width="0.8"/>
<rect x="1232" y="367.2" width="7.6" height="7.2" fill="#9a9c9e" stroke="#3a3d40" stroke-width="0.7"/><rect x="1232" y="367.2" width="7.6" height="2" fill="#232629"/><rect x="1233.2" y="370.6" width="3.4" height="2.6" fill="#7f8183" stroke="#e9e9e9" stroke-width="0.4"/>
</svg>
<!-- tool options dock -->
<div class="panel" style="left:1080.2px;top:384.3px;width:166.6px;height:202px;"></div>
<div class="a" style="left:1082px;top:399px;width:152px;height:173.9px;overflow:hidden;">
<div class="btn" style="left:2.4px;top:14.8px;width:19.3px;height:18.6px;"></div>
<div class="btn" style="left:24.6px;top:14.8px;width:19.1px;height:18.6px;"></div>
<div class="btn" style="left:46.7px;top:14.8px;width:19.2px;height:18.6px;"></div>
<div class="btn" style="left:77.3px;top:14.8px;width:19.2px;height:18.6px;"></div>
<div class="btn" style="left:99.4px;top:14.8px;width:19.2px;height:18.6px;"></div>
<div class="btn" style="left:129.8px;top:14.8px;width:19.1px;height:18.6px;"></div>
<div class="btn" style="left:2.4px;top:39.6px;width:19.3px;height:18.9px;"></div>
<div class="btn" style="left:24.6px;top:39.6px;width:19.1px;height:18.9px;"></div>
<div class="btn" style="left:46.7px;top:39.6px;width:19.2px;height:18.9px;"></div>
<div class="btn" style="left:77.3px;top:39.6px;width:19.2px;height:18.9px;"></div>
<div class="btn" style="left:99.4px;top:39.6px;width:19.2px;height:18.9px;"></div>
<div class="btn" style="left:129.8px;top:39.6px;width:19.1px;height:18.9px;"></div>
<div class="a" style="left:71.2px;top:14.0px;width:0.9px;height:45px;background:#cfd1d2;"></div>
<div class="a" style="left:123.6px;top:14.0px;width:0.9px;height:45px;background:#cfd1d2;"></div>
<div class="a" style="left:1.7px;top:65.1px;width:150.4px;height:0.9px;background:#cfd1d2;"></div>
<div class="a" style="left:1.7px;top:125.9px;width:150.4px;height:0.9px;background:#cfd1d2;"></div>
<div class="a" style="left:55.3px;top:79.3px;width:60px;height:17.1px;border:1px solid #d3d5d6;border-radius:2px;background:#f1f2f3;"></div>
<div class="a" style="left:55.3px;top:102.2px;width:60px;height:17.1px;border:1px solid #d3d5d6;border-radius:2px;background:#f1f2f3;"></div>
<div class="a" style="left:120.2px;top:79.3px;width:60px;height:17.1px;border:1px solid #d3d5d6;border-radius:2px;background:#f1f2f3;"></div>
<div class="a" style="left:120.2px;top:102.2px;width:60px;height:17.1px;border:1px solid #d3d5d6;border-radius:2px;background:#f1f2f3;"></div>
<div class="btn" style="left:2.4px;top:141.1px;width:31.1px;height:16.7px;"></div>
<div class="btn" style="left:38.6px;top:141.1px;width:119.4px;height:16.7px;"></div>
<div class="a" style="left:40.9px;top:164.4px;width:87.6px;height:17px;border:1px solid #c0c2c4;border-radius:2px;background:#fcfcfc;"></div>
<div class="a" style="left:134.2px;top:164.4px;width:40px;height:17px;border:1px solid #c0c2c4;border-radius:2px;background:#fcfcfc;"></div>
<div class="a" style="left:0;top:0;width:152px;height:174px;will-change:transform;z-index:2;">
<span class="t" style="left:1.70px;top:169.97px;font-size:7.6px;color:#232629;letter-spacing:-0.130px;font-weight:normal">Thickness:</span>
<span class="t" style="left:92.00px;top:170.14px;font-size:7.4px;color:#232629;letter-spacing:-0.080px;font-weight:normal">0.01 in</span>
<span class="t" style="left:143.80px;top:84.64px;font-size:7.4px;color:#a9acae;letter-spacing:-0.086px;font-weight:normal">0.00 in</span>
<span class="t" style="left:143.80px;top:107.54px;font-size:7.4px;color:#a9acae;letter-spacing:-0.086px;font-weight:normal">0.00 in</span>
</div>
<svg style="left:0;top:0" width="152" height="174" viewBox="1082 399 152 174" fill="none">
<g transform="translate(1094.1,423.1)" stroke="#3a3d40" stroke-width="0.75"><path d="M-3.4 -4V4"/><rect x="-2.9" y="-3.2" width="6.4" height="2.6"/><rect x="-2.9" y="0.8" width="3.6" height="2.6"/></g>
<g transform="translate(1116.2,423.1)" stroke="#3a3d40" stroke-width="0.75"><rect x="-1.7" y="-3.4" width="3.4" height="2.6"/><rect x="-3.3" y="0.6" width="6.6" height="2.6"/><path d="M0 -0.8V0.6"/></g>
<g transform="translate(1138.3,423.1)" stroke="#3a3d40" stroke-width="0.75"><path d="M3.4 -4V4"/><rect x="-3.5" y="-3.2" width="6.4" height="2.6"/><rect x="-0.7" y="0.8" width="3.6" height="2.6"/></g>
<g transform="translate(1168.9,423.1)" stroke="#3a3d40" stroke-width="0.75"><path d="M-3.6 -3.6H3.8"/><path d="M-2 3.4V-2.4M-3.4 -1L-2 -2.4L-0.6 -1"/><path d="M0.4 -1.6H3.8M0.4 0H3.8M0.4 1.6H3.8M-3.6 3.4H3.8" stroke-width="0.7"/></g>
<g transform="translate(1191.0,423.1)" stroke="#3a3d40" stroke-width="0.75"><path d="M-2 3.4V-3M-3.6 -1.2H-0.4"/><path d="M0.4 -3.2H3.8M0.4 -1.6H3.8M0.4 0H3.8M0.4 1.6H3.8M-3.6 3.4H3.8" stroke-width="0.7"/></g>
<g transform="translate(1221.3,423.1)" stroke="#3a3d40" stroke-width="0.75"><rect x="-3.7" y="-3.7" width="7.4" height="7.4"/><rect x="-2.3" y="-2.3" width="1.8" height="1.8" fill="#3a3d40" stroke="none"/><rect x="0.5" y="-2.3" width="1.8" height="1.8" fill="#3a3d40" stroke="none"/><rect x="-2.3" y="0.5" width="1.8" height="1.8" fill="#3a3d40" stroke="none"/><rect x="0.5" y="0.5" width="1.8" height="1.8" fill="#3a3d40" stroke="none"/></g>
<g transform="translate(1094.1,448.1)" stroke="#3a3d40" stroke-width="0.75"><path d="M-4 -3.4H4"/><rect x="-3.2" y="-2.9" width="2.6" height="3.4"/><rect x="0.8" y="-2.9" width="2.6" height="6.4"/></g>
<g transform="translate(1116.2,448.1)" stroke="#3a3d40" stroke-width="0.75"><rect x="-3" y="-3.3" width="2.4" height="6.6" rx="0.8"/><rect x="0.8" y="-1.5" width="2.6" height="3" rx="1.2"/><path d="M-0.6 0H0.8"/></g>
<g transform="translate(1138.3,448.1)" stroke="#3a3d40" stroke-width="0.75"><path d="M-4 3.4H4"/><rect x="-3.2" y="-0.5" width="2.6" height="3.4"/><rect x="0.8" y="-3.5" width="2.6" height="6.4"/></g>
<g transform="translate(1168.9,448.1)" stroke="#3a3d40" stroke-width="0.75"><path d="M-3.6 3.6H3.8"/><path d="M-2 -3.4V2.4M-3.4 1L-2 2.4L-0.6 1"/><path d="M0.4 -3.2H3.8M0.4 -1.6H3.8M0.4 0H3.8M0.4 1.6H3.8" stroke-width="0.7"/></g>
<g transform="translate(1191.0,448.1)" stroke="#3a3d40" stroke-width="0.75"><path d="M-2 -3.4V2.6M-3.6 0.8H-0.4"/><path d="M0.4 -3.2H3.8M0.4 -1.6H3.8M0.4 0H3.8M0.4 1.6H3.8M-3.6 3.4H3.8" stroke-width="0.7"/></g>
<g transform="translate(1221.3,448.1)" stroke="#3a3d40" stroke-width="0.75"><path d="M-3.4 -3.4L-0.8 -0.8M3.4 -3.4L0.8 -0.8M-3.4 3.4L-0.8 0.8M3.4 3.4L0.8 0.8" stroke-width="0.9"/><path d="M-3.6 -1.6V-3.6H-1.6M3.6 -1.6V-3.6H1.6M-3.6 1.6V3.6H-1.6M3.6 1.6V3.6H1.6" stroke-width="0.6"/></g>
<rect x="1089.7" y="485.1" width="26.6" height="26.5" stroke="#0a0a0a" stroke-width="1.4"/>
<circle cx="1116.4" cy="485.4" r="4.7" stroke="#5f6366" stroke-width="0.6"/>
<circle cx="1090.0" cy="511.7" r="4.7" stroke="#5f6366" stroke-width="0.6"/>
<circle cx="1116.4" cy="511.7" r="4.7" stroke="#5f6366" stroke-width="0.6"/>
<circle cx="1103.2" cy="498.5" r="4.6" stroke="#5f6366" stroke-width="0.6"/>
<circle cx="1090" cy="485.4" r="4.7" fill="#eaf5fc" stroke="#3daee9" stroke-width="0.7"/><circle cx="1090" cy="485.4" r="2.7" fill="#2a9de6"/>
<path d="M1187.4 485.7L1190 483.1L1192.6 485.7M1187.4 489.1L1190 491.7L1192.6 489.1" stroke="#c3c5c7" stroke-width="0.75"/>
<path d="M1187.4 508.6L1190 506.0L1192.6 508.6M1187.4 512.0L1190 514.6L1192.6 512.0" stroke="#c3c5c7" stroke-width="0.75"/>
<path d="M1087 548.3H1103.2" stroke="#31363b" stroke-width="1.3"/>
<path d="M1105.4 546.8L1108.3 549.7L1111.2 546.8" stroke="#3a3d40" stroke-width="0.8"/>
<path d="M1123.2 548.3H1223.8" stroke="#31363b" stroke-width="1.3"/>
<path d="M1226.4 546.8L1229.4 549.8L1232.4 546.8" stroke="#3a3d40" stroke-width="0.8"/>
<path d="M1200.8 570L1203.8 567L1206.8 570" stroke="#3a3d40" stroke-width="0.8"/>
</svg>
</div>
<svg style="left:1078px;top:384px" width="170" height="204" viewBox="1078 384 170 204" fill="none">
<path d="M1084.4 389.1H1090.6L1087.5 392.9Z" fill="#111"/>
<circle cx="1102.4" cy="390.9" r="4.9" stroke="#151515" stroke-width="0.95"/>
<path d="M1100.3 390.6C1100.3 387.7 1104.5 387.7 1104.5 390.3L1104.5 391.5" stroke="#151515" stroke-width="0.8"/>
<rect x="1100.2" y="391.4" width="4.3" height="1.9" fill="#151515"/>
<path d="M1222.6 396.2V389.6H1225L1225.8 390.6H1229.6V393" stroke="#2b2e31" stroke-width="0.8"/><path d="M1222.6 396.2H1226.6" stroke="#2b2e31" stroke-width="0.8"/><path d="M1228.4 393.8V396.8M1226.9 395.3H1229.9" stroke="#2b2e31" stroke-width="0.75"/>
<rect x="1236.9" y="387.7" width="4.6" height="4.6" rx="0.8" stroke="#111" stroke-width="1.25"/><rect x="1234.6" y="390.1" width="4.8" height="4.6" rx="0.8" fill="#eff0f1" stroke="#111" stroke-width="1.25"/>
<path d="M1237.5 407.4L1240.3 404.6L1243.1 407.4" stroke="#c3c5c7" stroke-width="0.8"/>
<rect x="1237.4" y="412.3" width="5.9" height="147.2" rx="2.9" fill="#b3b5b8"/>
<rect x="1237.4" y="412.3" width="5.9" height="85.6" rx="2.9" fill="#62666b"/>
<path d="M1237.3 565.8L1240.2 568.7L1243.1 565.8" stroke="#3a3d40" stroke-width="0.8"/>
<rect x="1094.1" y="576.1" width="126.8" height="6.4" rx="3.2" fill="#b3b5b8"/>
<rect x="1094.1" y="576.1" width="98.4" height="6.4" rx="3.2" fill="#62666b"/>
<path d="M1089 576.8L1086.4 579.4L1089 582" stroke="#c3c5c7" stroke-width="0.8"/>
<path d="M1226.2 576.6L1229 579.4L1226.2 582.2" stroke="#3a3d40" stroke-width="0.8"/>
</svg>
<!-- add shape dock -->
<div class="panel" style="left:1080.2px;top:588.3px;width:166.6px;height:77.6px;"></div>
<div class="a" style="left:1082.4px;top:604.6px;width:131.6px;height:30px;border:1px solid #d9dadb;border-radius:1.5px;background:#fcfcfc;overflow:hidden;">
<div class="a" style="left:0;top:0;width:131px;height:29px;will-change:transform;">
<span class="t" style="left:2.50px;top:22.57px;font-size:7.6px;color:#232629;letter-spacing:-0.100px;">Ellipse</span>
<span class="t" style="left:32.10px;top:22.57px;font-size:7.6px;color:#232629;letter-spacing:-0.050px;">Star</span>
<span class="t" style="left:53.40px;top:22.57px;font-size:7.6px;color:#232629;letter-spacing:-0.100px;width:23.9px;overflow:hidden;">Rectangle</span>
<span class="t" style="left:79.70px;top:22.57px;font-size:7.6px;color:#232629;letter-spacing:-0.100px;width:23.3px;overflow:hidden;">Artistic Text</span>
<span class="t" style="left:106.60px;top:22.57px;font-size:7.6px;color:#232629;letter-spacing:-0.100px;">Image</span>
</div>
<svg style="left:0;top:0" width="131" height="29" viewBox="1083.4 605.6 131 29" fill="none">
<defs><linearGradient id="sg" x1="0" y1="0" x2="1" y2="1"><stop offset="0" stop-color="#d6d6d6"/><stop offset="1" stop-color="#e6e6e6"/></linearGradient></defs>
<path d="M1095.7 616.1V606.7A9.4 9.4 0 1 0 1105.1 616.1Z" fill="url(#sg)" stroke="#cfcfcf" stroke-width="0.5"/>
<polygon points="1121.50,607.10 1124.03,613.62 1131.01,614.01 1125.59,618.43 1127.38,625.19 1121.50,621.40 1115.62,625.19 1117.41,618.43 1111.99,614.01 1118.97,613.62" fill="url(#sg)" stroke="#cfcfcf" stroke-width="0.5"/>
<rect x="1139.4" y="608" width="16.8" height="16.8" fill="url(#sg)" stroke="#cfcfcf" stroke-width="0.5"/>
<path d="M1166.3 609.5H1181.6" stroke="#3a3d40" stroke-width="0.75"/>
<path d="M1166.3 612.2H1174.2" stroke="#8a8d8f" stroke-width="0.75"/>
<path d="M1166.3 614.9H1181.6" stroke="#3a3d40" stroke-width="0.75"/>
<path d="M1166.3 617.6H1176.0" stroke="#8a8d8f" stroke-width="0.75"/>
<path d="M1166.3 620.3H1181.6" stroke="#3a3d40" stroke-width="0.75"/>
<path d="M1166.3 622.9H1180.0" stroke="#3a3d40" stroke-width="0.75"/>
<rect x="1180.6" y="622.6" width="1.2" height="1.2" fill="#3a3d40"/>
<rect x="1192.6" y="609.2" width="14.8" height="14.4" stroke="#2b2e31" stroke-width="0.85"/>
<circle cx="1196.8" cy="612.9" r="1.6" stroke="#2b2e31" stroke-width="0.7"/>
<path d="M1195 621.6L1198.4 617.6L1200 619.4L1203 616L1205.4 618" stroke="#2b2e31" stroke-width="0.7"/>
</svg>
</div>
<div class="btn" style="left:1215.6px;top:604.7px;width:30px;height:29.8px;"></div>
<svg style="left:1078px;top:588px" width="170" height="80" viewBox="1078 588 170 80" fill="none">
<path d="M1084.4 593.3H1090.6L1087.5 597.1Z" fill="#111"/>
<circle cx="1102.4" cy="595.1" r="4.9" stroke="#151515" stroke-width="0.95"/>
<path d="M1100.3 594.8C1100.3 591.9 1104.5 591.9 1104.5 594.5L1104.5 595.7" stroke="#151515" stroke-width="0.8"/>
<rect x="1100.2" y="595.6" width="4.3" height="1.9" fill="#151515"/>
<rect x="1221.6" y="592" width="4.6" height="4.6" rx="0.8" stroke="#111" stroke-width="1.25"/><rect x="1219.3" y="594.4" width="4.8" height="4.6" rx="0.8" fill="#eff0f1" stroke="#111" stroke-width="1.25"/>
<path d="M1234.9 592.6L1240.3 598M1240.3 592.6L1234.9 598" stroke="#111" stroke-width="1.25"/>
<circle cx="1226.2" cy="615.3" r="3.3" fill="#3a3d40"/><rect x="1231.7" y="612.2" width="6.4" height="6.2" fill="#3a3d40"/><rect x="1223.8" y="620.7" width="4.7" height="6.2" fill="#3a3d40"/><path d="M1230.6 626.2H1238.1L1234.35 621.1Z" fill="#3a3d40"/>
</svg>
<div id="txt" style="position:absolute;left:0;top:0;width:1248px;height:702px;will-change:transform;">
<span class="t" id="t0" style="left:585.20px;top:15.64px;font-size:8.7px;color:#fcfcfc;letter-spacing:-0.016px;">model.svg – Karbon</span>
<span class="t" id="t1" style="left:6.60px;top:34.97px;font-size:8.3px;color:#232629;letter-spacing:-0.144px;">File</span>
<span class="t" id="t2" style="left:32.90px;top:34.97px;font-size:8.3px;color:#232629;letter-spacing:0.051px;">Edit</span>
<span class="t" id="t3" style="left:60.60px;top:34.97px;font-size:8.3px;color:#232629;letter-spacing:0.089px;">View</span>
<span class="t" id="t4" style="left:91.80px;top:34.97px;font-size:8.3px;color:#232629;letter-spacing:0.186px;">Object</span>
<span class="t" id="t5" style="left:130.50px;top:34.97px;font-size:8.3px;color:#232629;letter-spacing:0.180px;">Path</span>
<span class="t" id="t6" style="left:161.60px;top:34.97px;font-size:8.3px;color:#232629;letter-spacing:-0.060px;">Effects</span>
<span class="t" id="t7" style="left:199.60px;top:34.97px;font-size:8.3px;color:#232629;letter-spacing:0.214px;">Settings</span>
<span class="t" id="t8" style="left:244.80px;top:34.97px;font-size:8.3px;color:#232629;letter-spacing:0.105px;">Help</span>
<span class="t" id="t9" style="left:24.50px;top:57.31px;font-size:7.9px;color:#232629;-webkit-text-stroke:0.25px #232629;letter-spacing:0.034px;">New</span>
<span class="t" id="t10" style="left:69.00px;top:57.31px;font-size:7.9px;color:#232629;-webkit-text-stroke:0.25px #232629;letter-spacing:-0.028px;">Open</span>
<span class="t" id="t11" style="left:117.30px;top:57.31px;font-size:7.9px;color:#232629;-webkit-text-stroke:0.25px #232629;letter-spacing:-0.250px;">Save</span>
<span class="t" id="t12" style="left:165.70px;top:57.31px;font-size:7.9px;color:#a9acae;letter-spacing:0.081px;">Undo</span>
<span class="t" id="t13" style="left:214.00px;top:57.31px;font-size:7.9px;color:#232629;-webkit-text-stroke:0.25px #232629;">Redo Move shapes</span>
<span class="t" id="t14" style="left:316.00px;top:57.31px;font-size:7.9px;color:#a9acae;letter-spacing:-0.027px;">Cut</span>
<span class="t" id="t15" style="left:357.00px;top:57.31px;font-size:7.9px;color:#a9acae;letter-spacing:-0.105px;">Copy</span>
<span class="t" id="t16" style="left:404.00px;top:57.31px;font-size:7.9px;color:#232629;-webkit-text-stroke:0.25px #232629;letter-spacing:-0.077px;">Paste</span>
<span class="t" id="t17" style="left:452.70px;top:57.31px;font-size:7.9px;color:#a9acae;letter-spacing:0.131px;">Delete</span>
<span class="t" id="t18" style="left:5.30px;top:77.27px;font-size:7.6px;color:#232629;letter-spacing:-0.110px;">T...</span>
<span class="t" id="t19" style="left:893.10px;top:676.48px;font-size:7.7px;color:#232629;letter-spacing:0.020px;">9.18, 7.51</span>
<span class="t" id="t20" style="left:981.50px;top:676.31px;font-size:7.9px;color:#232629;letter-spacing:0.068px;">48%</span>
<span class="t" id="t21" style="left:1103.40px;top:676.25px;font-size:7.5px;color:#4d5154;letter-spacing:-0.024px;">Stroke:</span>
<span class="t" id="t22" style="left:1146.20px;top:676.25px;font-size:7.5px;color:#232629;letter-spacing:-0.009px;">None</span>
<span class="t" id="t23" style="left:1184.00px;top:676.25px;font-size:7.5px;color:#4d5154;letter-spacing:-0.134px;">Fill:</span>
<span class="t" id="t24" style="left:1214.80px;top:676.25px;font-size:7.5px;color:#232629;letter-spacing:-0.109px;">None</span>
<span class="t" id="t25" style="left:1113.70px;top:77.47px;font-size:7.6px;color:#232629;letter-spacing:0.000px;">Layer view</span>
<span class="t" id="t26" style="left:1113.90px;top:387.98px;font-size:7.7px;color:#232629;letter-spacing:0.064px;">Tool Options</span>
<span class="t" id="t27" style="left:1113.50px;top:592.05px;font-size:7.5px;color:#232629;letter-spacing:-0.114px;">Add Shape</span>
<span class="t" id="t28" style="left:1107.30px;top:92.55px;font-size:7.5px;color:#232629;font-weight:bold;letter-spacing:-0.103px;">Layer</span>
<span class="t" id="t29" style="left:1120.10px;top:102.80px;font-size:7.5px;color:#232629;letter-spacing:0.044px;">layer4</span>
<span class="t" id="t30" style="left:1120.10px;top:113.17px;font-size:7.5px;color:#232629;letter-spacing:0.044px;">layer2</span>
<span class="t" id="t31" style="left:1120.10px;top:123.54px;font-size:7.5px;color:#232629;letter-spacing:-0.025px;">path3919</span>
<span class="t" id="t32" style="left:1120.10px;top:133.91px;font-size:7.5px;color:#232629;letter-spacing:-0.025px;">path3917</span>
<span class="t" id="t33" style="left:1120.10px;top:144.28px;font-size:7.5px;color:#232629;letter-spacing:-0.025px;">path3915</span>
<span class="t" id="t34" style="left:1120.10px;top:154.65px;font-size:7.5px;color:#232629;letter-spacing:-0.025px;">path3913</span>
<span class="t" id="t35" style="left:1120.10px;top:165.02px;font-size:7.5px;color:#232629;letter-spacing:0.046px;">path3911</span>
<span class="t" id="t36" style="left:1120.10px;top:175.39px;font-size:7.5px;color:#232629;letter-spacing:-0.132px;">g3357</span>
<span class="t" id="t37" style="left:1083.90px;top:403.67px;font-size:7.6px;color:#232629;letter-spacing:0.024px;">Arrange</span>
<span class="t" id="t38" style="left:1083.90px;top:468.67px;font-size:7.6px;color:#232629;letter-spacing:0.032px;">Geometry</span>
<span class="t" id="t39" style="left:1126.60px;top:484.17px;font-size:7.6px;color:#232629;">X:</span>
<span class="t" id="t40" style="left:1126.60px;top:507.07px;font-size:7.6px;color:#232629;">Y:</span>
<span class="t" id="t41" style="left:1160.40px;top:484.04px;font-size:7.4px;color:#a9acae;letter-spacing:-0.086px;">0.00 in</span>
<span class="t" id="t42" style="left:1160.40px;top:506.94px;font-size:7.4px;color:#a9acae;letter-spacing:-0.086px;">0.00 in</span>
<span class="t" id="t43" style="left:1083.90px;top:529.97px;font-size:7.6px;color:#232629;letter-spacing:-0.165px;">Line</span>
</div>
</div>
</body>
</html>
